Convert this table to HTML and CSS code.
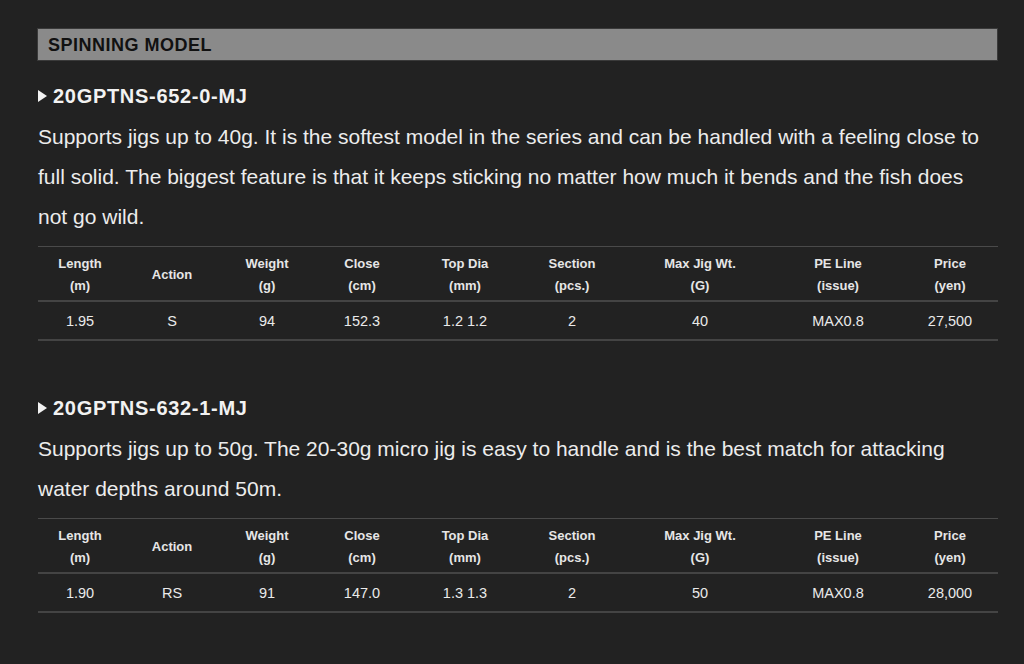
FILE: index.html
```html
<!DOCTYPE html>
<html>
<head>
<meta charset="utf-8">
<link rel="stylesheet" href="styles.css">
</head>
<body>
<div class="page">
  <h2 class="section-title">SPINNING MODEL</h2>

  <div class="model">
    <h3 class="model-name"><span class="tri"></span>20GPTNS-652-0-MJ</h3>
    <p class="desc">Supports jigs up to 40g. It is the softest model in the series and can be handled with a feeling close to full solid. The biggest feature is that it keeps sticking no matter how much it bends and the fish does not go wild.</p>
    <table class="spec">
      <colgroup>
        <col class="c1"><col class="c2"><col class="c3"><col class="c4"><col class="c5"><col class="c6"><col class="c7"><col class="c8"><col class="c9">
      </colgroup>
      <thead>
        <tr><th>Length<br>(m)</th><th>Action</th><th>Weight<br>(g)</th><th>Close<br>(cm)</th><th>Top Dia<br>(mm)</th><th>Section<br>(pcs.)</th><th>Max Jig Wt.<br>(G)</th><th>PE Line<br>(issue)</th><th>Price<br>(yen)</th></tr>
      </thead>
      <tbody>
        <tr><td>1.95</td><td>S</td><td>94</td><td>152.3</td><td>1.2 1.2</td><td>2</td><td>40</td><td>MAX0.8</td><td>27,500</td></tr>
      </tbody>
    </table>
  </div>

  <div class="model">
    <h3 class="model-name"><span class="tri"></span>20GPTNS-632-1-MJ</h3>
    <p class="desc">Supports jigs up to 50g. The 20-30g micro jig is easy to handle and is the best match for attacking water depths around 50m.</p>
    <table class="spec">
      <colgroup>
        <col class="c1"><col class="c2"><col class="c3"><col class="c4"><col class="c5"><col class="c6"><col class="c7"><col class="c8"><col class="c9">
      </colgroup>
      <thead>
        <tr><th>Length<br>(m)</th><th>Action</th><th>Weight<br>(g)</th><th>Close<br>(cm)</th><th>Top Dia<br>(mm)</th><th>Section<br>(pcs.)</th><th>Max Jig Wt.<br>(G)</th><th>PE Line<br>(issue)</th><th>Price<br>(yen)</th></tr>
      </thead>
      <tbody>
        <tr><td>1.90</td><td>RS</td><td>91</td><td>147.0</td><td>1.3 1.3</td><td>2</td><td>50</td><td>MAX0.8</td><td>28,000</td></tr>
      </tbody>
    </table>
  </div>
</div>
</body>
</html>
```

FILE: styles.css
```css
html, body {
  margin: 0;
  padding: 0;
  background: #222222;
}
body {
  font-family: "Liberation Sans", Arial, sans-serif;
  color: #ededed;
}
.page {
  padding: 28px 26px 0 38px;
}
.section-title {
  margin: 0;
  height: 31px;
  background: #8a8a8a;
  border: 1px solid #3a3a3a;
  box-sizing: content-box;
  margin-left: -1px;
  color: #111;
  font-size: 18px;
  letter-spacing: 0.5px;
  font-weight: bold;
  line-height: 32px;
  padding: 0 10px;
}
.model {
  margin-top: 23px;
}
.model + .model {
  margin-top: 55px;
}
.model-name {
  margin: 0;
  font-size: 20px;
  letter-spacing: 0.7px;
  font-weight: bold;
  color: #f2f2f2;
  line-height: 24px;
  display: flex;
  align-items: center;
}
.tri {
  width: 0;
  height: 0;
  border-top: 6px solid transparent;
  border-bottom: 6px solid transparent;
  border-left: 9px solid #f2f2f2;
  margin-right: 6px;
}
.desc {
  margin: 9px 0 0;
  font-size: 21px;
  line-height: 40px;
  color: #ececec;
}
.spec {
  margin-top: 9px;
  width: 960px;
  border-collapse: collapse;
  table-layout: fixed;
}
.c1 { width: 84px; }
.c2 { width: 100px; }
.c3 { width: 90px; }
.c4 { width: 100px; }
.c5 { width: 106px; }
.c6 { width: 108px; }
.c7 { width: 148px; }
.c8 { width: 128px; }
.c9 { width: 96px; }
.spec th {
  font-size: 13px;
  font-weight: bold;
  line-height: 22px;
  color: #e6e6e6;
  padding: 6px 0 3px;
  border-top: 1px solid #4a4a4a;
  border-bottom: 2px solid #444;
  text-align: center;
  vertical-align: middle;
}
.spec td {
  font-size: 14.5px;
  line-height: 20px;
  color: #eaeaea;
  padding: 9px 0 8px;
  text-align: center;
  border-bottom: 2px solid #444;
}
```
